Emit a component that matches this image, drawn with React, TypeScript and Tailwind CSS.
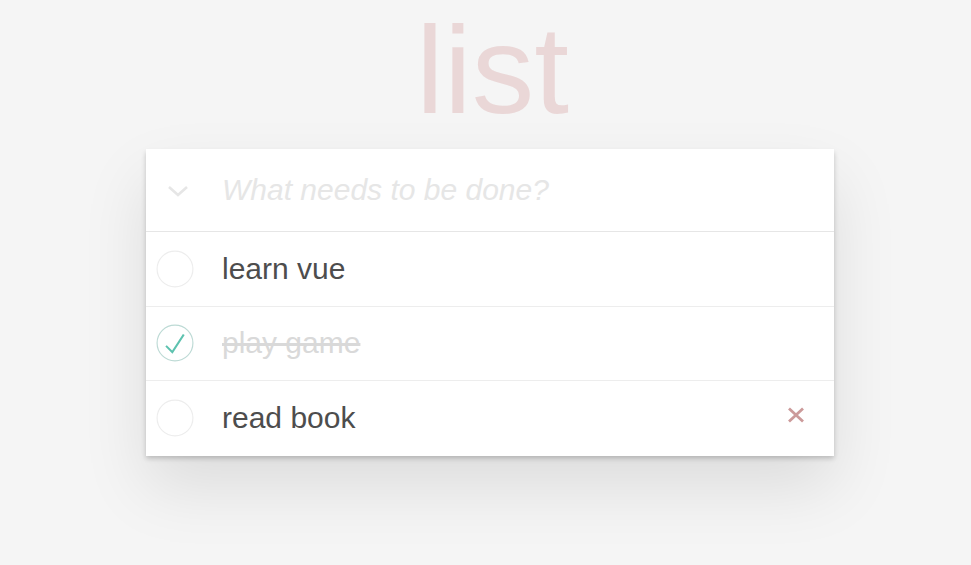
import React from "react";

type Todo = { id: number; title: string; done: boolean; hover?: boolean };

const todos: Todo[] = [
  { id: 1, title: "learn vue", done: false },
  { id: 2, title: "play game", done: true },
  { id: 3, title: "read book", done: false, hover: true },
];

function Toggle({ checked }: { checked: boolean }) {
  return (
    <svg width="38" height="38" viewBox="-3 -3 106 106" aria-hidden="true">
      <circle cx="50" cy="50" r="50" fill="none" stroke={checked ? "#bddad5" : "#ededed"} strokeWidth="3.2" />
      {checked && <path fill="#5dc2af" d="M72 25L42 71 27 56l-4 4 20 20 34-52z" />}
    </svg>
  );
}

export default function App() {
  return (
    <div className="min-h-screen bg-[#f5f5f5] font-['Liberation_Sans',Arial,sans-serif] pt-[7px]">
      <h1 className="text-center text-[125px] leading-[125px] font-thin text-[rgba(175,47,47,0.15)] pl-[14px]">
        list
      </h1>

      <section className="mt-[17px] ml-[146px] w-[688px] bg-white shadow-[0_2.5px_5px_0_rgba(0,0,0,0.2),0_31px_62px_0_rgba(0,0,0,0.1)]">
        <header className="flex items-center h-[83px] border-b border-[#e6e6e6]">
          <div className="w-[76px] flex justify-start pl-[21px] pt-[2px]">
            <svg width="22" height="12" viewBox="0 0 22 12" aria-hidden="true">
              <path d="M2 2 L11 10 L20 2" fill="none" stroke="#e6e6e6" strokeWidth="2.6" />
            </svg>
          </div>
          <span className="text-[30px] leading-[42px] italic text-[#e6e6e6]">What needs to be done?</span>
        </header>

        <ul>
          {todos.map((t, i) => (
            <li
              key={t.id}
              className={`flex items-center h-[74.5px] ${i < todos.length - 1 ? "border-b border-[#ededed]" : ""}`}
            >
              <div className="w-[76px] pl-[10px] flex items-center">
                <Toggle checked={t.done} />
              </div>
              <span
                className={`flex-1 text-[30px] leading-[36px] ${
                  t.done ? "text-[#d9d9d9] line-through" : "text-[#4d4d4d]"
                }`}
              >
                {t.title}
              </span>
              {t.hover && (
                <svg className="mr-[29px] mb-[6px]" width="18" height="16" viewBox="0 0 18 16" aria-hidden="true">
                  <path d="M2 1.5 L16 14.5 M16 1.5 L2 14.5" stroke="#cc9a9a" strokeWidth="2.8" />
                </svg>
              )}
            </li>
          ))}
        </ul>
      </section>
    </div>
  );
}
